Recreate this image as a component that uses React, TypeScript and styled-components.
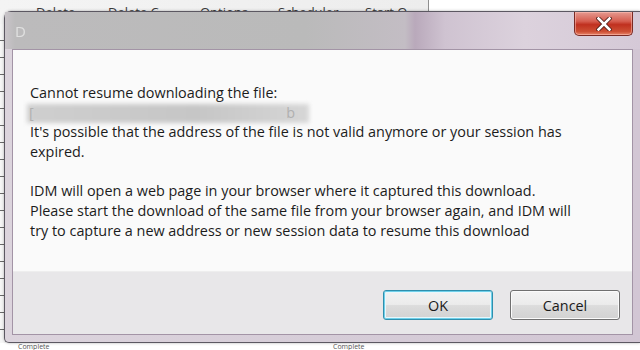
import * as React from 'react';
import styled, { createGlobalStyle } from 'styled-components';

const GlobalStyle = createGlobalStyle`
  html, body {
    margin: 0;
    padding: 0;
    width: 640px;
    height: 350px;
    overflow: hidden;
    background: #ffffff;
  }
`;

const Desktop = styled.div`
  position: relative;
  width: 640px;
  height: 350px;
  overflow: hidden;
  background: #f3f3f3;
  font-family: 'Open Sans', 'Noto Sans', sans-serif;
`;

const BackToolbar = styled.div`
  display: flex;
  height: 24px;
  padding-left: 36px;
  background: linear-gradient(to right, #f4f4f4 0, #ededed 428px, #8f8f8f 428px, #8f8f8f 429px, #ffffff 429px);
`;

const BackTool = styled.span<{ $w: number }>`
  width: ${(p) => p.$w}px;
  padding-top: 3px;
  font-size: 13px;
  color: #3a3a3a;
  white-space: nowrap;
`;

const BackList = styled.div`
  position: absolute;
  left: 0;
  top: 24px;
  bottom: 0;
  width: 4px;
  background: repeating-linear-gradient(to bottom, #f6f6f6 0, #f6f6f6 16px, #6a6a6a 16px, #6a6a6a 17px);
`;

const BackFooter = styled.div`
  position: absolute;
  left: 0;
  right: 0;
  top: 343px;
  height: 7px;
  display: flex;
  padding-left: 18px;
  font-size: 7px;
  line-height: 7px;
  color: #555;
  background: #ffffff;
`;

const BackFoot = styled.span<{ $w: number }>`
  width: ${(p) => p.$w}px;
  white-space: nowrap;
`;

const Window = styled.div`
  position: absolute;
  left: 4px;
  top: 11px;
  width: 636px;
  height: 332px;
  box-sizing: border-box;
  border: 1px solid #5c5862;
  border-right: none;
  border-radius: 7px 0 0 5px;
  background: linear-gradient(to right, #dcd4dd 0%, #d6cdd8 50%, #d2c6d4 100%);
  display: flex;
  flex-direction: column;
  box-shadow: 0 0 3px rgba(0, 0, 0, 0.3);
`;

const TitleBar = styled.div`
  position: relative;
  height: 37px;
  flex-shrink: 0;
  display: flex;
  align-items: center;
  padding-left: 10px;
  background: linear-gradient(
    to right,
    #c9c4c9 0px,
    #bcbbbc 10px,
    #bababa 300px,
    #c3bdc4 400px,
    #b9a9bb 410px,
    #cfc3d1 440px,
    #dcd2dd 520px,
    #d5c9d7 636px
  );
`;

const TitleText = styled.span`
  font-size: 15px;
  color: #e0e0e0;
  filter: blur(0.4px);
`;

const CloseButton = styled.button`
  position: absolute;
  top: 0;
  right: 7px;
  width: 59px;
  height: 24px;
  padding: 0;
  border: 1px solid #7a2a24;
  border-top: none;
  border-radius: 0 0 5px 5px;
  background: linear-gradient(to bottom, #e59a90 0%, #d65e50 40%, #c0301f 55%, #cd4f34 85%, #e8856a 100%);
  display: flex;
  align-items: center;
  justify-content: center;
  box-shadow: inset 0 0 0 1px rgba(255, 200, 190, 0.5);
`;

const ClientArea = styled.div`
  flex: 1;
  margin: 0 7px 7px 7px;
  border: 1px solid #a394a6;
  background: #fafafa;
  display: flex;
  flex-direction: column;
`;

const Content = styled.div`
  flex: 1;
  padding: 33px 0 0 17px;
  font-size: 14.4px;
  line-height: 19.7px;
  color: #1c1c1c;
`;

const Paragraph = styled.p`
  margin: 0 0 19.7px 0;
  white-space: nowrap;
`;

const Redacted = styled.span`
  position: relative;
  display: block;
  width: 282px;
  height: 19.7px;
  margin-left: -3px;
  color: #b0b0b0;

  &::before {
    content: '';
    position: absolute;
    inset: 1px 0 -1px 0;
    background: linear-gradient(to right, #cfcfcf, #c6c6c6 60%, #d6d6d6);
    filter: blur(2px);
  }
`;

const RedactedEdge = styled.span<{ $right?: boolean }>`
  position: absolute;
  top: 0;
  ${(p) => (p.$right ? 'right: 14px;' : 'left: 2px;')}
`;

const Footer = styled.div`
  height: 63px;
  flex-shrink: 0;
  background: #e8e7e9;
  border-top: 1px solid #eeeeee;
  display: flex;
  align-items: center;
  justify-content: flex-end;
  gap: 17px;
  padding-right: 12px;
  padding-top: 4px;
  box-sizing: border-box;
`;

const DialogButton = styled.button<{ $focused?: boolean }>`
  width: 110px;
  height: 30px;
  box-sizing: border-box;
  border-radius: 3px;
  border: 1px solid ${(p) => (p.$focused ? '#2f8fad' : '#707070')};
  background: linear-gradient(to bottom, #f3f3f3 0%, #ebebeb 48%, #dcdcdc 52%, #d2d2d2 100%);
  box-shadow: ${(p) =>
    p.$focused
      ? 'inset 0 0 0 1px #6fd0ea, inset 0 0 0 2px #e8f7fb'
      : 'inset 0 0 0 1px #fbfbfb'};
  font-family: 'Open Sans', 'Noto Sans', sans-serif;
  font-size: 14.4px;
  color: #1a1a1a;
  padding: 0;
`;

const CloseGlyph = () => (
  <svg width="16" height="14" viewBox="0 0 16 14">
    <path d="M2.5 1.5 L13.5 12.5 M13.5 1.5 L2.5 12.5" stroke="#4a1a14" strokeWidth="4.2" strokeLinecap="square" />
    <path d="M2.5 1.5 L13.5 12.5 M13.5 1.5 L2.5 12.5" stroke="#ffffff" strokeWidth="2.6" strokeLinecap="square" />
  </svg>
);

export default function App() {
  return (
    <>
      <GlobalStyle />
      <Desktop>
        <BackToolbar>
          <BackTool $w={72}>Delete</BackTool>
          <BackTool $w={92}>Delete C</BackTool>
          <BackTool $w={78}>Options</BackTool>
          <BackTool $w={87}>Scheduler</BackTool>
          <BackTool $w={70}>Start Q</BackTool>
        </BackToolbar>
        <BackList />
        <BackFooter>
          <BackFoot $w={315}>Complete</BackFoot>
          <BackFoot $w={100}>Complete</BackFoot>
        </BackFooter>
        <Window>
          <TitleBar>
            <TitleText>D</TitleText>
            <CloseButton aria-label="Close">
              <CloseGlyph />
            </CloseButton>
          </TitleBar>
          <ClientArea>
            <Content>
              <Paragraph>
                Cannot resume downloading the file:
                <Redacted>
                  <RedactedEdge>[</RedactedEdge>
                  <RedactedEdge $right>b</RedactedEdge>
                </Redacted>
                It's possible that the address of the file is not valid anymore or your session has
                <br />
                expired.
              </Paragraph>
              <Paragraph>
                IDM will open a web page in your browser where it captured this download.
                <br />
                Please start the download of the same file from your browser again, and IDM will
                <br />
                try to capture a new address or new session data to resume this download
              </Paragraph>
            </Content>
            <Footer>
              <DialogButton $focused>OK</DialogButton>
              <DialogButton>Cancel</DialogButton>
            </Footer>
          </ClientArea>
        </Window>
      </Desktop>
    </>
  );
}
